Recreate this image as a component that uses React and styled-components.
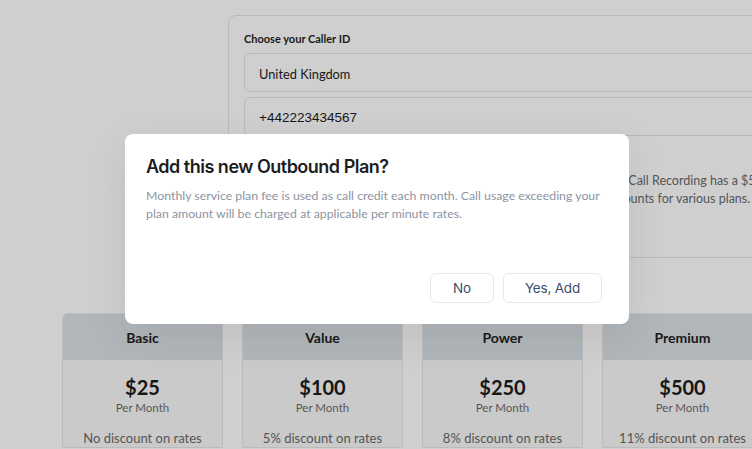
import React from 'react';
import styled, { createGlobalStyle } from 'styled-components';

const GlobalStyles = createGlobalStyle`
  html, body {
    margin: 0;
    padding: 0;
    background: #ffffff;
    font-family: Lato, "Open Sans", sans-serif;
    overflow: hidden;
  }
`;

const Page = styled.div`
  position: relative;
  width: 752px;
  height: 449px;
  overflow: hidden;
  background: #ffffff;
`;

const CallerPanel = styled.section`
  margin: 15px 0 0 228px;
  width: 620px;
  height: 243px;
  box-sizing: border-box;
  border: 1px solid #e6e6e6;
  border-radius: 8px;
  padding: 16px 15px;
`;

const Label = styled.div`
  font-size: 11px;
  line-height: 14px;
  font-weight: 700;
  color: #1f1f1f;
  margin-bottom: 7px;
`;

const Field = styled.div`
  height: 39px;
  box-sizing: border-box;
  border: 1px solid #e4e4e4;
  border-radius: 6px;
  display: flex;
  align-items: center;
  padding: 2px 14px 0;
  color: #1e1e1e;
  margin-bottom: 5px;
  font-size: ${(p) => (p.$phone ? '13.5px' : '12.8px')};
  font-family: ${(p) => (p.$phone ? '"Liberation Sans", Arial, sans-serif' : 'Lato, sans-serif')};
`;

const Note = styled.p`
  margin: 36px 0 0;
  font-size: 12.5px;
  line-height: 18px;
  color: #6a6a6a;
  white-space: nowrap;
`;

const PlanRow = styled.div`
  display: flex;
  gap: 19px;
  margin: 55px 0 0 62px;
`;

const PlanCard = styled.div`
  flex: 0 0 161px;
  box-sizing: border-box;
  border: 1px solid #e8e8e8;
  border-radius: 6px 6px 0 0;
  background: #f9f9f9;
  overflow: hidden;
  text-align: center;
`;

const PlanHeader = styled.div`
  height: 46px;
  background: #dbe0e6;
  display: flex;
  align-items: center;
  justify-content: center;
  font-size: 14px;
  font-weight: 700;
  color: #222;
`;

const Price = styled.div`
  margin-top: 14px;
  font-size: 20px;
  line-height: 26px;
  font-weight: 700;
  color: #1c1c1c;
`;

const Period = styled.div`
  margin-top: 1px;
  font-size: 11.5px;
  line-height: 14px;
  color: #6e6e6e;
`;

const Discount = styled.div`
  margin-top: 14px;
  font-size: 13px;
  line-height: 18px;
  color: #6a6a6a;
`;

const Overlay = styled.div`
  position: absolute;
  inset: 0;
  background: rgba(0, 0, 0, 0.19);
  display: flex;
  justify-content: center;
  align-items: center;
`;

const Dialog = styled.div`
  width: 504px;
  height: 190px;
  margin-top: 9px;
  margin-left: 2px;
  box-sizing: border-box;
  background: #ffffff;
  border-radius: 8px;
  box-shadow: 0 12px 40px rgba(0, 0, 0, 0.08);
  padding: 21px 27px 21px 21px;
  display: flex;
  flex-direction: column;
`;

const Title = styled.h2`
  margin: 0;
  font-family: Inter, "Noto Sans", sans-serif;
  font-size: 18px;
  line-height: 24px;
  font-weight: 600;
  letter-spacing: -0.5px;
  color: #1d1d1f;
`;

const Message = styled.p`
  margin: 8px -8px 0 0;
  font-family: Lato, sans-serif;
  font-size: 12.3px;
  line-height: 18px;
  color: #8c94a1;
`;

const Actions = styled.div`
  margin-top: auto;
  display: flex;
  justify-content: flex-end;
  gap: 9px;
`;

const Button = styled.button`
  height: 30px;
  min-width: ${(p) => p.$min || 0}px;
  padding: 0 21px;
  border: 1px solid #e5e7eb;
  border-radius: 6px;
  background: #ffffff;
  font-family: Inter, "Noto Sans", sans-serif;
  font-size: 13.5px;
  letter-spacing: -0.2px;
  color: #3c4e6d;
  cursor: pointer;
`;

const plans = [
  { name: 'Basic', price: '$25', discount: 'No discount on rates' },
  { name: 'Value', price: '$100', discount: '5% discount on rates' },
  { name: 'Power', price: '$250', discount: '8% discount on rates' },
  { name: 'Premium', price: '$500', discount: '11% discount on rates' },
];

export default function App() {
  return (
    <Page>
      <GlobalStyles />
      <CallerPanel>
        <Label>Choose your Caller ID</Label>
        <Field>United Kingdom</Field>
        <Field $phone>+442223434567</Field>
        <Note>
          Outbound calls are billed per minute at each destination&apos;s rate shown. Call Recording has a $5.00 monthly fee.
          <br />
          Every monthly plan includes a calling credit every month and rate discounts for various plans.
        </Note>
      </CallerPanel>

      <PlanRow>
        {plans.map((plan) => (
          <PlanCard key={plan.name}>
            <PlanHeader>{plan.name}</PlanHeader>
            <Price>{plan.price}</Price>
            <Period>Per Month</Period>
            <Discount>{plan.discount}</Discount>
          </PlanCard>
        ))}
      </PlanRow>

      <Overlay>
        <Dialog>
          <Title>Add this new Outbound Plan?</Title>
          <Message>
            Monthly service plan fee is used as call credit each month. Call usage exceeding your plan amount will be
            charged at applicable per minute rates.
          </Message>
          <Actions>
            <Button $min={64}>No</Button>
            <Button>Yes, Add</Button>
          </Actions>
        </Dialog>
      </Overlay>
    </Page>
  );
}
